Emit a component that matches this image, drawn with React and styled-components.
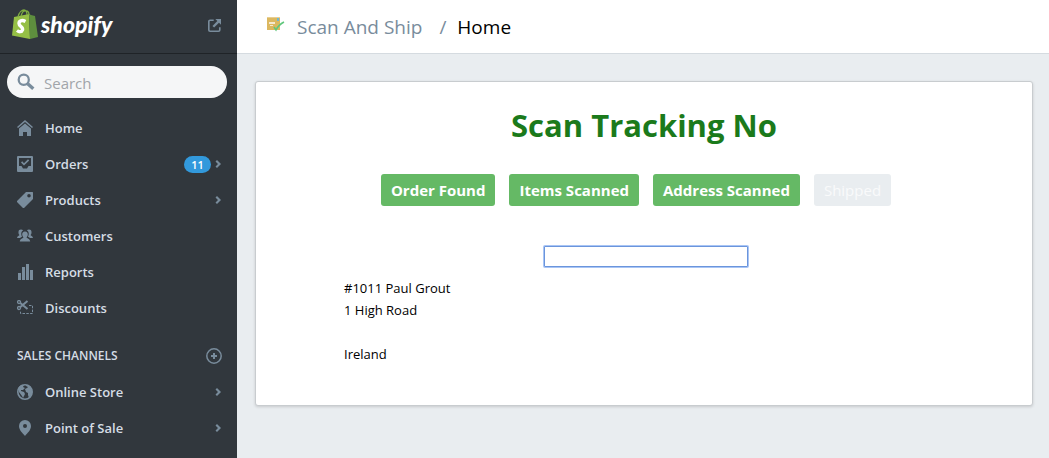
import React from 'react';
import styled, { createGlobalStyle } from 'styled-components';

const GlobalStyle = createGlobalStyle`
  *,
  *::before,
  *::after {
    box-sizing: border-box;
  }

  body {
    margin: 0;
    background-color: #e9edf0;
    color: #000;
    font-family: 'Segoe UI', 'Open Sans', 'Noto Sans', sans-serif;
    font-size: 13px;
    line-height: 22px;
  }

  a {
    color: inherit;
    text-decoration: none;
  }
`;

const Page = styled.div`
  display: flex;
  min-height: 100vh;
`;

const Sidebar = styled.aside`
  flex: none;
  width: 237px;
  background-color: #31373d;
  color: #d5dde5;
`;

const SidebarHeader = styled.div`
  display: flex;
  align-items: center;
  justify-content: space-between;
  height: 54px;
  padding: 0 16px 6px 12px;
  border-bottom: 1px solid #1f2327;
`;

const LogoLink = styled.a`
  display: flex;
  gap: 2px;
  color: #fff;
`;

const Wordmark = styled.span`
  font-family: Lato, sans-serif;
  font-size: 23px;
  font-style: italic;
  font-weight: 900;
  line-height: 30px;
`;

const Icon = styled.svg.attrs(({ size = 16 }) => ({
  width: size,
  height: size,
  viewBox: '0 0 16 16',
  'aria-hidden': true,
}))`
  flex: none;
  fill: #798c9c;
`;

const StoreLink = styled.a`
  display: flex;
  padding-top: 3px;
`;

const Search = styled.label`
  display: flex;
  align-items: center;
  gap: 9px;
  height: 32px;
  margin: 12px 10px 12px 7px;
  padding: 0 10px;
  border-radius: 16px;
  background-color: #f5f6f7;
`;

const SearchInput = styled.input`
  flex: 1;
  min-width: 0;
  padding: 2px 0 0;
  border: 0;
  outline: 0;
  background: transparent;
  font: inherit;
  font-size: 15px;

  &::placeholder {
    color: #a1a5aa;
    opacity: 1;
  }
`;

const NavLink = styled.a`
  display: flex;
  align-items: center;
  gap: 12px;
  height: 36px;
  padding: 0 14px 0 17px;
  font-weight: 600;
`;

const NavLabel = styled.span`
  flex: 1;
`;

const NavExtra = styled.span`
  display: flex;
  align-items: center;
  gap: 4px;
`;

const Badge = styled.span`
  min-width: 27px;
  border-radius: 9px;
  background-color: #3299dc;
  color: #fff;
  font-size: 11px;
  line-height: 17px;
  text-align: center;
`;

const SectionHeader = styled.div`
  display: flex;
  align-items: center;
  justify-content: space-between;
  height: 36px;
  margin-top: 12px;
  padding: 0 15px 0 17px;
`;

const SectionTitle = styled.h2`
  margin: 0;
  font-size: 12px;
  font-weight: 600;
  text-transform: uppercase;
`;

const IconButton = styled.button`
  display: flex;
  padding: 0;
  border: 0;
  background: none;
  cursor: pointer;
`;

const Main = styled.main`
  flex: 1;
  min-width: 0;
`;

const TopBar = styled.header`
  display: flex;
  align-items: center;
  height: 54px;
  padding: 0 28px;
  border-bottom: 1px solid #d5dbe0;
  background-color: #fff;
  font-size: 19px;
`;

const Crumb = styled.a`
  margin-left: 12px;
  color: #798c9c;
`;

const Slash = styled.span`
  margin: 0 11px 0 17px;
  color: #798c9c;
`;

const Card = styled.section`
  margin: 27px 16px 0 18px;
  padding: 22px 88px 40px;
  border: 1px solid #c8cccf;
  border-radius: 3px;
  background-color: #fff;
  box-shadow: 0 1px 3px rgba(0, 0, 0, 0.15);
`;

const Title = styled.h1`
  margin: 0;
  color: #1b7a1b;
  font-size: 31px;
  font-weight: 700;
  line-height: 42px;
  text-align: center;
`;

const Steps = styled.div`
  display: flex;
  justify-content: center;
  gap: 14px;
  margin-top: 28px;
  padding-right: 16px;
`;

const Step = styled.span`
  padding: 0 10px;
  border-radius: 3px;
  background-color: ${({ $done }) => ($done ? '#65b965' : '#e9edf0')};
  color: ${({ $done }) => ($done ? '#fff' : '#f9fafb')};
  font-size: 15px;
  font-weight: ${({ $done }) => ($done ? 700 : 400)};
  line-height: 32px;
`;

const ScanForm = styled.form`
  display: flex;
  justify-content: center;
  padding: 40px 0 10px 4px;
`;

const TrackingInput = styled.input`
  width: 204px;
  height: 21px;
  padding: 0 4px;
  border: 1px solid #6b95dc;
  border-radius: 1px;
  outline: 0;
  box-shadow: 0 0 0 1px #a9c5f5;
  font: inherit;
`;

const Address = styled.address`
  font-style: normal;
  min-height: 88px;
`;

const Chevron = () => (
  <Icon size={8}>
    <path d="M4 0l8 8-8 8-3-3 5-5-5-5z" />
  </Icon>
);

const Bag = () => (
  <svg width="27" height="30" viewBox="0 0 27 30" aria-hidden="true">
    <path d="M2 8l15-3 1 25-18-3.500z" fill="#95bf46" />
    <path d="M17 5l2 1 4 1 3 21-8 2z" fill="#5e8e3e" />
    <path
      d="M6 8C7 3 10 1 12 1c2 0 3 3 3 5M9 7c1-4 3-6 5-5 2 0 3 2 3 4"
      fill="none"
      stroke="#7fae42"
      strokeWidth="1.300"
    />
    <path
      d="M13.500 12.500c-4-2-6.500-.5-6.500 2 0 3 4.500 3.500 3.500 6.500-.8 2.300-3.500 2-5.500 0.500"
      fill="none"
      stroke="#fff"
      strokeWidth="3.400"
    />
  </svg>
);

const Parcel = () => (
  <svg width="20" height="20" viewBox="0 0 20 20" aria-hidden="true">
    <path d="M2 0h13v13H2z" fill="#dcb860" />
    <path d="M2 0h13v1H2z" fill="#e8cf92" />
    <path d="M4 5h6v2H4zM5 8h3v1H5z" fill="#f5ead0" />
    <path d="M12 1h2v3h-2z" fill="#6fb8d0" />
    <path d="M9 10l2 3c2-4 4-6 8-8" fill="none" stroke="#5fc77c" strokeWidth="1.600" />
  </svg>
);

const navIcons = {
  home: (
    <>
      <path d="M8 0l8 7-1 1-7-6-7 6-1-1z" />
      <path d="M8 3.500l6 5V16h-4v-4H6v4H2V8.500z" />
    </>
  ),
  orders: (
    <>
      <path
        fillRule="evenodd"
        d="M1 0h14a1 1 0 011 1v14a1 1 0 01-1 1H1a1 1 0 01-1-1V1a1 1 0 011-1zm1 2v8h2.500l1.500 2.500h4l1.500-2.500H14V2z"
      />
      <path d="M4 6.500l1.200-1.200L7 7.200l4-4 1.200 1.200L7 9.600z" />
    </>
  ),
  products: (
    <path
      fillRule="evenodd"
      d="M9 0h6.500l.5.5V7l-9 9-1 0-6-6V9zm3 2a1.800 1.800 0 100 3.600A1.800 1.800 0 0012 2z"
    />
  ),
  customers: (
    <>
      <path d="M8 3.500c2 0 3 1.300 2.800 3.200-.1 1.300-.7 2-1.200 2.600 0 1.300 3.400 1 3.600 4.200H2.800c.2-3.200 3.600-2.900 3.600-4.200-.5-.6-1.100-1.300-1.200-2.600C5 4.800 6 3.500 8 3.500z" />
      <path d="M4 1.500c1 0 1.700.3 2.100.9C4.700 3 4 4.500 4.300 6.500c.1.900.4 1.500.8 2.100L3 10H0c.2-2 2.400-1.900 2.400-2.900C1.500 6.300 1.400 5 1.500 3.800 1.600 2.300 2.500 1.500 4 1.500zM12 1.500c-1 0-1.700.3-2.100.9 1.400.6 2.100 2.100 1.800 4.100-.1.900-.4 1.500-.8 2.100l2.100 1.400h3c-.2-2-2.400-1.900-2.400-2.900.9-.8 1-2.100.9-3.300-.1-1.500-1-2.300-2.500-2.300z" />
    </>
  ),
  reports: <path d="M1 9h3v7H1zM5 3h3v13H5zM9 0h3v16H9zM13 6h3v10h-3z" />,
  discounts: (
    <g fill="none" stroke="#798c9c">
      <circle cx="2" cy="2" r="1.500" strokeWidth="1.300" />
      <circle cx="2" cy="8" r="1.500" strokeWidth="1.300" />
      <path d="M3.300 3L10.500 9M3.300 7L10.500 1" strokeWidth="2" />
      <path d="M12 5.500h3.500v8h-12V11" strokeDasharray="2.500 1.300" />
    </g>
  ),
  globe: (
    <>
      <circle cx="8" cy="8" r="7.200" fill="none" stroke="#798c9c" strokeWidth="1.600" />
      <path d="M1 4l3-3 3 0-1 2 2 1-2 2-2 0 0 1 3 1 1 2-2 4-1-2-3-4zM9 1l4 1 2 4 0 4-3 4-1-3 0-2-2-1-1-3 2-1 1-1-2-1z" />
    </>
  ),
  pin: (
    <path
      fillRule="evenodd"
      d="M8 0a6 6 0 016 6c0 4-3.500 7-6 10C5.500 13 2 10 2 6a6 6 0 016-6zm0 4a2 2 0 100 4 2 2 0 000-4z"
    />
  ),
};

const NavItem = ({ icon, label, count, expandable }) => (
  <NavLink href="#">
    <Icon>{navIcons[icon]}</Icon>
    <NavLabel>{label}</NavLabel>
    <NavExtra>
      {count && <Badge>{count}</Badge>}
      {expandable && <Chevron />}
    </NavExtra>
  </NavLink>
);

const App = () => (
  <>
    <GlobalStyle />
    <Page>
      <Sidebar>
        <SidebarHeader>
          <LogoLink href="#">
            <Bag />
            <Wordmark>shopify</Wordmark>
          </LogoLink>
          <StoreLink href="#" aria-label="View your website">
            <Icon size={13}>
              <path
                d="M7 1.500H2.500A1.500 1.500 0 001 3v10.500A1.500 1.500 0 002.500 15H13a1.500 1.500 0 001.500-1.500V10"
                fill="none"
                stroke="#798c9c"
                strokeWidth="2"
              />
              <path d="M9 0h7v7l-2.500-2.500-6 6-2-2 6-6z" />
            </Icon>
          </StoreLink>
        </SidebarHeader>
        <Search>
          <Icon size={18}>
            <circle cx="6" cy="6" r="4.500" fill="none" stroke="#798c9c" strokeWidth="2" />
            <path d="M9.500 9.500l5 4.500" stroke="#798c9c" strokeWidth="3" />
          </Icon>
          <SearchInput type="text" placeholder="Search" aria-label="Search" />
        </Search>
        <nav>
          <NavItem icon="home" label="Home" />
          <NavItem icon="orders" label="Orders" count={11} expandable />
          <NavItem icon="products" label="Products" expandable />
          <NavItem icon="customers" label="Customers" />
          <NavItem icon="reports" label="Reports" />
          <NavItem icon="discounts" label="Discounts" />
          <SectionHeader>
            <SectionTitle>Sales Channels</SectionTitle>
            <IconButton type="button" aria-label="Add sales channel">
              <Icon>
                <circle cx="8" cy="8" r="7.200" fill="none" stroke="#798c9c" strokeWidth="1.500" />
                <path d="M7 5h2v2h2v2H9v2H7V9H5V7h2z" />
              </Icon>
            </IconButton>
          </SectionHeader>
          <NavItem icon="globe" label="Online Store" expandable />
          <NavItem icon="pin" label="Point of Sale" expandable />
        </nav>
      </Sidebar>
      <Main>
        <TopBar>
          <Parcel />
          <Crumb href="#">Scan And Ship</Crumb>
          <Slash>/</Slash>
          <span>Home</span>
        </TopBar>
        <Card>
          <Title>Scan Tracking No</Title>
          <Steps>
            <Step $done>Order Found</Step>
            <Step $done>Items Scanned</Step>
            <Step $done>Address Scanned</Step>
            <Step>Shipped</Step>
          </Steps>
          <ScanForm>
            <TrackingInput type="text" aria-label="Tracking number" />
          </ScanForm>
          <Address>
            #1011 Paul Grout
            <br />
            1 High Road
            <br />
            <br />
            Ireland
          </Address>
        </Card>
      </Main>
    </Page>
  </>
);

export default App;
